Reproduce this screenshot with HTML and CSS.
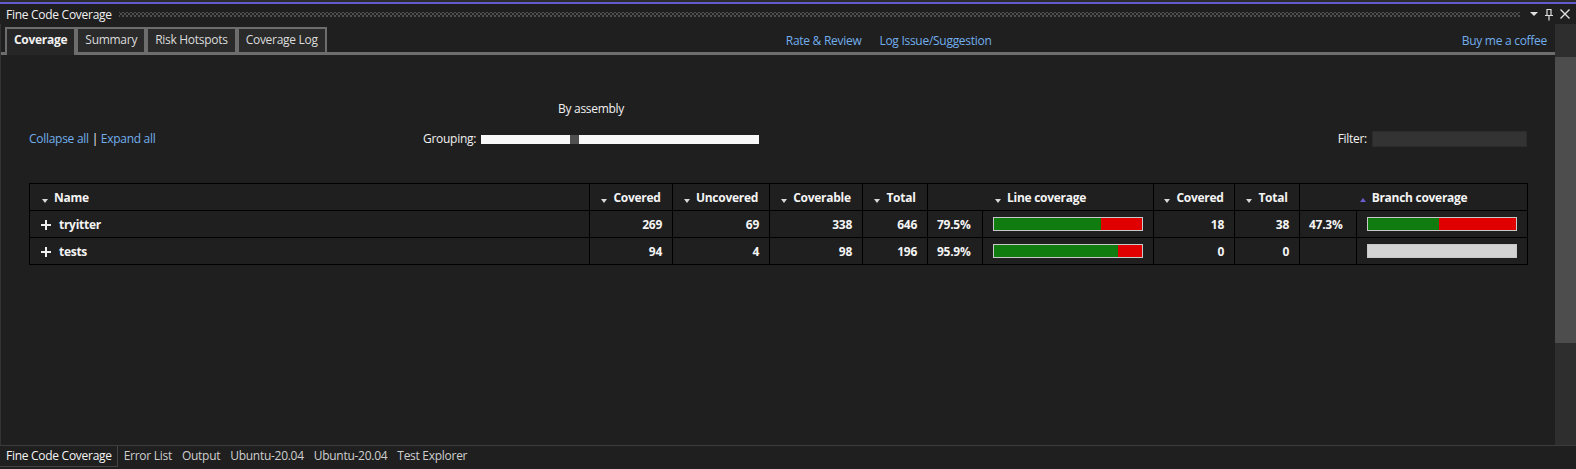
FILE: index.html
```html
<!DOCTYPE html>
<html>
<head>
<meta charset="utf-8">
<link rel="stylesheet" href="styles.css">
</head>
<body>
<div class="frame-top"></div>
<div class="accent"></div>
<div class="titlebar">
  <span class="title">Fine Code Coverage</span>
  <span class="grip"></span>
  <span class="win-icons">
    <svg class="ico" width="10" height="12" viewBox="0 0 10 12"><path d="M1 4h8L5 8z" fill="#e0e0e0"/></svg>
    <svg class="ico" width="10" height="13" viewBox="0 0 10 13"><path d="M3 1.5h4v6H3z M1 7.5h8 M5 7.5v5" fill="none" stroke="#e0e0e0" stroke-width="1.2"/></svg>
    <svg class="ico" width="12" height="12" viewBox="0 0 12 12"><path d="M1.5 1.5l9 9M10.5 1.5l-9 9" stroke="#e0e0e0" stroke-width="1.4"/></svg>
  </span>
</div>
<div class="main">
  <div class="content">
    <div class="tabrow">
      <div class="tabs">
        <div class="tab active">Coverage</div>
        <div class="tab">Summary</div>
        <div class="tab">Risk Hotspots</div>
        <div class="tab">Coverage Log</div>
      </div>
      <div class="links">
        <a class="link">Rate &amp; Review</a>
        <a class="link">Log Issue/Suggestion</a>
      </div>
      <a class="link coffee">Buy me a coffee</a>
    </div>
    <div class="tabline"></div>

    <div class="controls">
      <div class="collapse"><a class="link">Collapse all</a> <span class="sep">|</span> <a class="link">Expand all</a></div>
      <div class="grouping">
        <div class="group-label">By assembly</div>
        <div class="group-row">
          <span>Grouping:</span>
          <div class="slider"><div class="slider-fill left"></div><div class="thumb"></div><div class="slider-fill right"></div></div>
        </div>
      </div>
      <div class="filter">
        <span>Filter:</span>
        <div class="filter-input"></div>
      </div>
    </div>

    <table class="grid">
      <colgroup>
        <col style="width:560px"><col style="width:83px"><col style="width:97px"><col style="width:93px"><col style="width:65px"><col style="width:55px"><col style="width:171px"><col style="width:81px"><col style="width:65px"><col style="width:57px"><col style="width:171px">
      </colgroup>
      <thead>
        <tr>
          <th class="left"><span class="sort"></span>Name</th>
          <th><span class="sort"></span>Covered</th>
          <th><span class="sort"></span>Uncovered</th>
          <th><span class="sort"></span>Coverable</th>
          <th><span class="sort"></span>Total</th>
          <th colspan="2"><span class="sort"></span>Line coverage</th>
          <th><span class="sort"></span>Covered</th>
          <th><span class="sort"></span>Total</th>
          <th colspan="2"><span class="sort up"></span>Branch coverage</th>
        </tr>
      </thead>
      <tbody>
        <tr>
          <td class="name"><span class="plus"></span>tryitter</td>
          <td class="num">269</td>
          <td class="num">69</td>
          <td class="num">338</td>
          <td class="num">646</td>
          <td class="pct">79.5%</td>
          <td class="barcell"><div class="bar"><div class="green" style="width:72%"></div><div class="red"></div></div></td>
          <td class="num">18</td>
          <td class="num">38</td>
          <td class="pct">47.3%</td>
          <td class="barcell"><div class="bar"><div class="green" style="width:48%"></div><div class="red"></div></div></td>
        </tr>
        <tr>
          <td class="name"><span class="plus"></span>tests</td>
          <td class="num">94</td>
          <td class="num">4</td>
          <td class="num">98</td>
          <td class="num">196</td>
          <td class="pct">95.9%</td>
          <td class="barcell"><div class="bar"><div class="green" style="width:84%"></div><div class="red"></div></div></td>
          <td class="num">0</td>
          <td class="num">0</td>
          <td class="pct"></td>
          <td class="barcell"><div class="bar empty"></div></td>
        </tr>
      </tbody>
    </table>
  </div>
  <div class="scrollbar"><div class="thumb-v"></div></div>
</div>
<div class="bottom">
  <div class="btab active">Fine Code Coverage</div>
  <div class="btab">Error List</div>
  <div class="btab">Output</div>
  <div class="btab">Ubuntu-20.04</div>
  <div class="btab">Ubuntu-20.04</div>
  <div class="btab">Test Explorer</div>
</div>
</body>
</html>
```
FILE: styles.css
```css
* { box-sizing: border-box; }
html, body { margin: 0; padding: 0; }
body {
  width: 1576px;
  height: 469px;
  overflow: hidden;
  background: #1f1f1f;
  color: #f1f1f1;
  font-family: "Open Sans", "Noto Sans", sans-serif;
  font-size: 12px;
  letter-spacing: -0.28px;
  display: flex;
  flex-direction: column;
}
.frame-top { height: 2px; background: #2b2b2b; }
.accent { height: 2px; background: #6359d0; }
.titlebar {
  height: 20px;
  display: flex;
  align-items: center;
  padding-left: 6px;
  padding-right: 5px;
}
.title { color: #f1f1f1; white-space: nowrap; }
.grip {
  flex: 1;
  height: 5px;
  margin: 0 9px 0 7px;
  background-image: radial-gradient(circle, #505050 45%, transparent 50%), radial-gradient(circle, #505050 45%, transparent 50%);
  background-size: 4px 4px;
  background-position: 0 0, 2px 2px;
}
.win-icons { display: flex; align-items: center; gap: 5px; }
.ico { display: block; }

.main { height: 421px; display: flex; }
.content { width: 1555px; border-left: 1px solid #333; display: flex; flex-direction: column; }
.scrollbar { width: 21px; background: #2e2e2e; padding-top: 33px; }
.thumb-v { height: 286px; background: #4d4d4d; }

.tabrow {
  margin-top: 3px;
  height: 25px;
  display: flex;
  align-items: flex-end;
  padding-left: 4px;
  position: relative;
  z-index: 1;
}
.tabs { display: flex; align-items: flex-end; }
.tab {
  height: 25px;
  line-height: 22px;
  padding: 0 7px;
  border: 2px solid #6d6d6d;
  border-bottom: none;
  background: #2a2a2a;
  color: #dcdcdc;
  white-space: nowrap;
}
.tab.active {
  height: 28px;
  margin-bottom: -3px;
  background: #262626;
  font-weight: bold;
  color: #f1f1f1;
}
.links { display: flex; gap: 18px; margin-left: 459px; align-self: center; padding-top: 1px; }
.link { color: #72aeec; text-decoration: none; white-space: nowrap; }
.coffee { margin-left: auto; margin-right: 8px; align-self: center; padding-top: 1px; }
.tabline { height: 3px; background: #6d6d6d; }

.controls {
  display: flex;
  align-items: flex-end;
  padding: 0 28px 0 28px;
  margin-top: 46px;
}
.collapse { width: 394px; line-height: 16px; white-space: nowrap; }
.sep { color: #f1f1f1; }
.grouping { display: flex; flex-direction: column; align-items: center; gap: 14px; }
.group-label, .group-row { line-height: 16px; }
.group-row { display: flex; align-items: center; gap: 5px; }
.slider { display: flex; width: 278px; height: 9px; }
.slider-fill { background: #f8f8f8; }
.slider-fill.left { width: 89px; }
.slider-fill.right { flex: 1; }
.thumb { width: 9px; background: #505050; }
.filter { margin-left: auto; display: flex; align-items: center; gap: 5px; line-height: 16px; }
.filter-input { width: 155px; height: 16px; background: #333; border: 1px solid #2b2b2b; }

.grid {
  margin: 36px 0 0 28px;
  width: 1498px;
  border-collapse: collapse;
  table-layout: fixed;
}
.grid th, .grid td {
  border: 1px solid #000;
  height: 27px;
  padding: 0;
  font-weight: bold;
  color: #f4f4f4;
  white-space: nowrap;
}
.grid th { text-align: center; }
.grid th.left { text-align: left; padding-left: 12px; }
.sort {
  display: inline-block;
  width: 0; height: 0;
  border-left: 3.5px solid transparent;
  border-right: 3.5px solid transparent;
  border-top: 4px solid #d8d8d8;
  margin-right: 6px;
  vertical-align: -1px;
}
.sort.up {
  border-top: none;
  border-bottom: 4px solid #6a5fd0;
  vertical-align: 0px;
}
.name { padding-left: 11px !important; }
.plus {
  display: inline-block;
  position: relative;
  width: 10px; height: 10px;
  margin-right: 8px;
  vertical-align: -1px;
}
.plus::before, .plus::after { content: ""; position: absolute; background: #f0f0f0; }
.plus::before { left: 0; top: 4px; width: 10px; height: 2px; }
.plus::after { left: 4px; top: 0; width: 2px; height: 10px; }
.num { text-align: right; padding-right: 10px !important; }
.pct { padding-left: 9px !important; }
.barcell { padding: 0 10px !important; }
.bar {
  height: 14px;
  border: 1px solid #c8c8c8;
  display: flex;
  background: #e00000;
}
.green { background: #107c10; }
.red { flex: 1; background: #e00000; }
.bar.empty { background: #d3d3d3; }

.bottom {
  border-top: 1px solid #3c3c3c;
  flex: 1;
  display: flex;
  align-items: stretch;
}
.btab {
  padding: 0 5px 0 5px;
  line-height: 20px;
  color: #cfcfcf;
  white-space: nowrap;
}
.btab.active {
  color: #f4f4f4;
  padding-left: 6px;
  padding-right: 5px;
  margin-right: 1px;
  border-right: 1px solid #444;
  border-bottom: 1px solid #444;
  height: 21px;
}
```
